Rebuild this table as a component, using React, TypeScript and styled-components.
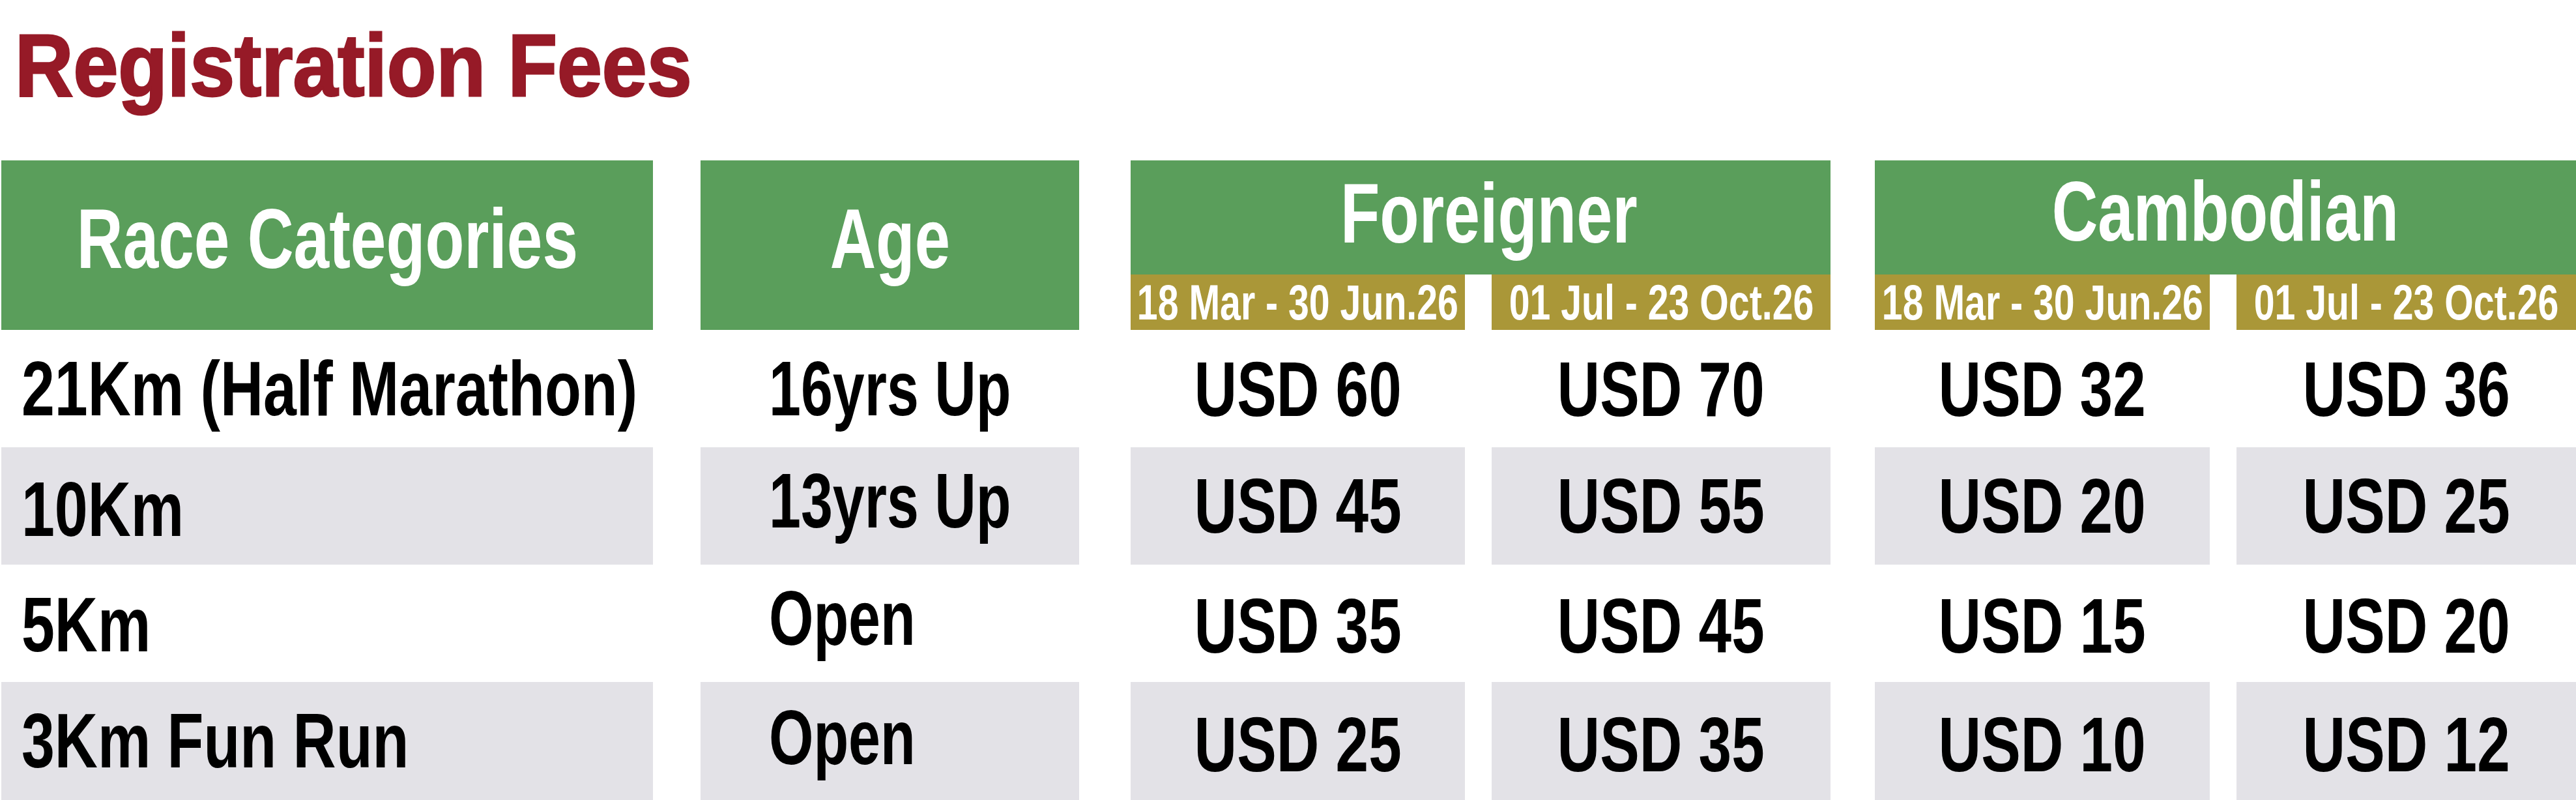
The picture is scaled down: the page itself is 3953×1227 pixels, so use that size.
import React from "react";
import styled, { createGlobalStyle } from "styled-components";

const GlobalStyle = createGlobalStyle`
  html, body {
    margin: 0;
    padding: 0;
    background: #ffffff;
  }
  body {
    font-family: "Liberation Sans", Arial, sans-serif;
    overflow: hidden;
  }
`;

const GREEN = "#5a9e5b";
const GOLD = "#aa9738";
const STRIPE = "#e3e2e7";
const RED = "#961a27";

type Col = { ml: number; w: number };

const COLS: Record<"race" | "age" | "f1" | "f2" | "c1" | "c2", Col> = {
    race: { ml: 2, w: 1000 },
    age: { ml: 73, w: 581 },
    f1: { ml: 79, w: 513 },
    f2: { ml: 41, w: 520 },
    c1: { ml: 68, w: 514 },
    c2: { ml: 41, w: 521 },
};

const FEE_COLS = [COLS.f1, COLS.f2, COLS.c1, COLS.c2];

const rows = [
    {
        race: "21Km (Half Marathon)",
        age: "16yrs Up",
        fees: ["USD 60", "USD 70", "USD 32", "USD 36"],
        h: 180,
        nudge: { race: 0, age: 0, fee: 1 },
    },
    {
        race: "10Km",
        age: "13yrs Up",
        fees: ["USD 45", "USD 55", "USD 20", "USD 25"],
        h: 180,
        nudge: { race: 5, age: -8, fee: 0 },
    },
    {
        race: "5Km",
        age: "Open",
        fees: ["USD 35", "USD 45", "USD 15", "USD 20"],
        h: 180,
        nudge: { race: 2, age: -8, fee: 4 },
    },
    {
        race: "3Km Fun Run",
        age: "Open",
        fees: ["USD 25", "USD 35", "USD 10", "USD 12"],
        h: 190,
        nudge: { race: -5, age: -10, fee: 1 },
    },
];

const Page = styled.div`
    width: 3953px;
    display: flex;
    flex-direction: column;
`;

const Title = styled.h1`
    margin: 32px 0 78px;
    padding-left: 23px;
    font-size: 136px;
    line-height: 1;
    font-weight: 700;
    color: ${RED};
    -webkit-text-stroke: 3px ${RED};
`;

// the artwork uses a narrow bold face, so squeeze Arial-width glyphs
const Squeeze = styled.span<{ $scale: number; $origin?: "left" | "center" }>`
    display: inline-block;
    white-space: nowrap;
    transform: scaleX(${(p) => p.$scale});
    transform-origin: ${(p) => p.$origin ?? "center"} center;
`;

const HeaderRow = styled.div`
    display: flex;
    height: 260px;
`;

const HeadBlock = styled.div<{ $w: number; $ml: number }>`
    flex-shrink: 0;
    box-sizing: border-box;
    width: ${(p) => p.$w}px;
    margin-left: ${(p) => p.$ml}px;
    padding-bottom: 20px;
    display: flex;
    align-items: center;
    justify-content: center;
    background: ${GREEN};
    color: #ffffff;
    font-size: 130px;
    font-weight: 700;
    line-height: 1;
`;

const GroupHead = styled.div<{ $w: number; $ml: number }>`
    flex-shrink: 0;
    width: ${(p) => p.$w}px;
    margin-left: ${(p) => p.$ml}px;
    display: flex;
    flex-direction: column;
`;

const GroupTitle = styled.div<{ $pb: number; $pl?: number }>`
    box-sizing: border-box;
    height: 175px;
    padding-bottom: ${(p) => p.$pb}px;
    padding-left: ${(p) => p.$pl ?? 0}px;
    display: flex;
    align-items: center;
    justify-content: center;
    background: ${GREEN};
    color: #ffffff;
    font-size: 130px;
    font-weight: 700;
    line-height: 1;
`;

const DateRow = styled.div`
    display: flex;
    height: 85px;
`;

const DateCell = styled.div<{ $w: number; $ml: number }>`
    flex-shrink: 0;
    width: ${(p) => p.$w}px;
    margin-left: ${(p) => p.$ml}px;
    display: flex;
    align-items: center;
    justify-content: center;
    background: ${GOLD};
    color: #ffffff;
    font-size: 76px;
    font-weight: 700;
    line-height: 1;
`;

const BodyRow = styled.div<{ $h: number }>`
    display: flex;
    height: ${(p) => p.$h}px;
    flex-shrink: 0;
`;

const Cell = styled.div<{
    $w: number;
    $ml: number;
    $shade: boolean;
    $align: "flex-start" | "center";
    $pl?: number;
    $dy?: number;
}>`
    flex-shrink: 0;
    box-sizing: border-box;
    width: ${(p) => p.$w}px;
    margin-left: ${(p) => p.$ml}px;
    padding-left: ${(p) => p.$pl ?? 0}px;
    padding-top: ${(p) => Math.max(p.$dy ?? 0, 0) * 2}px;
    padding-bottom: ${(p) => Math.max(-(p.$dy ?? 0), 0) * 2}px;
    display: flex;
    align-items: center;
    justify-content: ${(p) => p.$align};
    background: ${(p) => (p.$shade ? STRIPE : "transparent")};
    color: #000000;
    font-size: 118px;
    font-weight: 700;
    line-height: 1;
`;

const PeriodHeads = ({ left, right }: { left: Col; right: Col }) => (
    <DateRow>
        <DateCell $w={left.w} $ml={0}>
            <Squeeze $scale={0.753}>18 Mar - 30 Jun.26</Squeeze>
        </DateCell>
        <DateCell $w={right.w} $ml={right.ml}>
            <Squeeze $scale={0.753}>01 Jul - 23 Oct.26</Squeeze>
        </DateCell>
    </DateRow>
);

export default function App() {
    return (
        <Page>
            <GlobalStyle />
            <Title>
                <Squeeze $scale={0.91} $origin="left">
                    Registration Fees
                </Squeeze>
            </Title>

            <HeaderRow>
                <HeadBlock $w={COLS.race.w} $ml={COLS.race.ml}>
                    <Squeeze $scale={0.755}>Race Categories</Squeeze>
                </HeadBlock>
                <HeadBlock $w={COLS.age.w} $ml={COLS.age.ml}>
                    <Squeeze $scale={0.75}>Age</Squeeze>
                </HeadBlock>
                <GroupHead
                    $w={COLS.f1.w + COLS.f2.ml + COLS.f2.w}
                    $ml={COLS.f1.ml}
                >
                    <GroupTitle $pb={13} $pl={26}>
                        <Squeeze $scale={0.76}>Foreigner</Squeeze>
                    </GroupTitle>
                    <PeriodHeads left={COLS.f1} right={COLS.f2} />
                </GroupHead>
                <GroupHead
                    $w={COLS.c1.w + COLS.c2.ml + COLS.c2.w}
                    $ml={COLS.c1.ml}
                >
                    <GroupTitle $pb={20}>
                        <Squeeze $scale={0.752}>Cambodian</Squeeze>
                    </GroupTitle>
                    <PeriodHeads left={COLS.c1} right={COLS.c2} />
                </GroupHead>
            </HeaderRow>

            {rows.map((row, i) => {
                const shade = i % 2 === 1;
                return (
                    <BodyRow key={row.race} $h={row.h}>
                        <Cell
                            $w={COLS.race.w}
                            $ml={COLS.race.ml}
                            $shade={shade}
                            $align="flex-start"
                            $pl={31}
                            $dy={row.nudge.race}
                        >
                            <Squeeze $scale={0.775} $origin="left">
                                {row.race}
                            </Squeeze>
                        </Cell>
                        <Cell
                            $w={COLS.age.w}
                            $ml={COLS.age.ml}
                            $shade={shade}
                            $align="flex-start"
                            $pl={105}
                            $dy={row.nudge.age}
                        >
                            <Squeeze $scale={0.745} $origin="left">
                                {row.age}
                            </Squeeze>
                        </Cell>
                        {row.fees.map((fee, j) => (
                            <Cell
                                key={j}
                                $w={FEE_COLS[j].w}
                                $ml={FEE_COLS[j].ml}
                                $shade={shade}
                                $align="center"
                                $dy={row.nudge.fee}
                            >
                                <Squeeze $scale={0.77}>{fee}</Squeeze>
                            </Cell>
                        ))}
                    </BodyRow>
                );
            })}
        </Page>
    );
}
